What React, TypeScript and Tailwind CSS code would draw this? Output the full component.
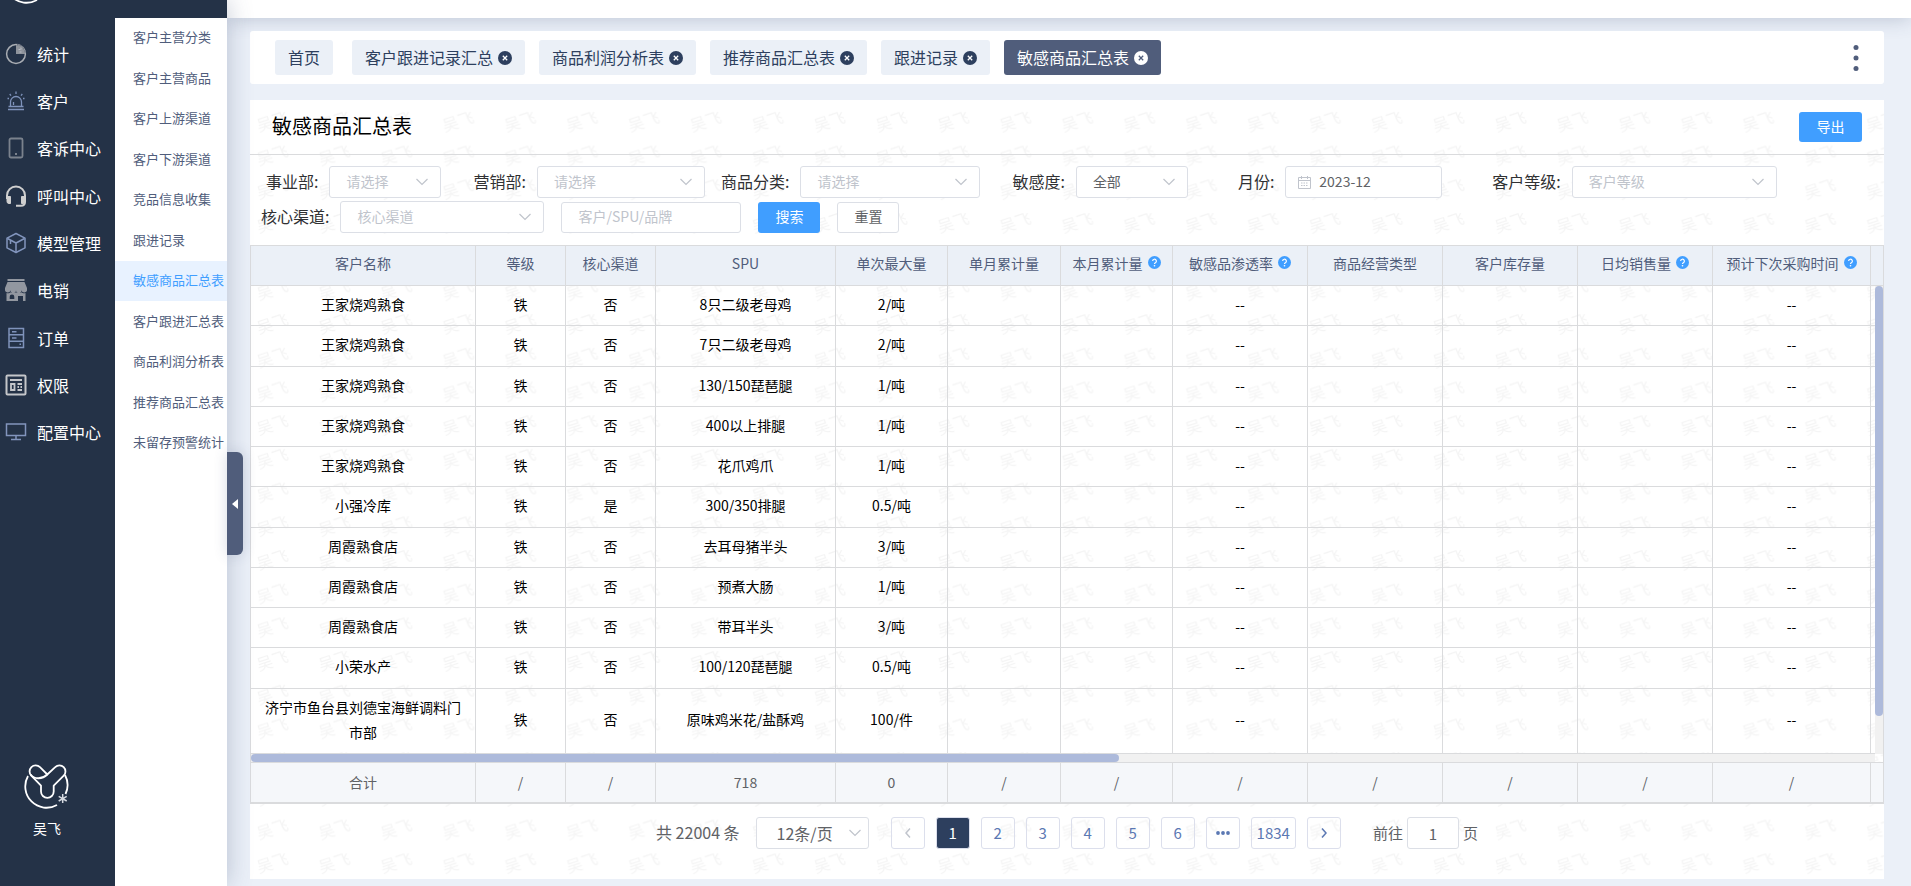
import React from "react";
import clsx from "clsx";

const navItems = [
  { label: "统计", icon: "pie" },
  { label: "客户", icon: "siren" },
  { label: "客诉中心", icon: "phone" },
  { label: "呼叫中心", icon: "headset" },
  { label: "模型管理", icon: "cube" },
  { label: "电销", icon: "shop" },
  { label: "订单", icon: "order" },
  { label: "权限", icon: "auth" },
  { label: "配置中心", icon: "monitor" },
];

const subItems = [
  "客户主营分类",
  "客户主营商品",
  "客户上游渠道",
  "客户下游渠道",
  "竞品信息收集",
  "跟进记录",
  "敏感商品汇总表",
  "客户跟进汇总表",
  "商品利润分析表",
  "推荐商品汇总表",
  "未留存预警统计",
];

const tabs = ["客户跟进记录汇总", "商品利润分析表", "推荐商品汇总表", "跟进记录", "敏感商品汇总表"];

const current = "敏感商品汇总表";

const columns = [
  { label: "客户名称", width: "w-[225px]" },
  { label: "等级", width: "w-[90px]" },
  { label: "核心渠道", width: "w-[90px]" },
  { label: "SPU", width: "w-[180px]" },
  { label: "单次最大量", width: "w-[112px]" },
  { label: "单月累计量", width: "w-[113px]" },
  { label: "本月累计量", width: "w-[112px]", help: true },
  { label: "敏感品渗透率", width: "w-[135px]", help: true },
  { label: "商品经营类型", width: "w-[135px]" },
  { label: "客户库存量", width: "w-[135px]" },
  { label: "日均销售量", width: "w-[135px]", help: true },
  { label: "预计下次采购时间", width: "w-[158px]", help: true },
  { label: "", width: "w-[13px]" },
];

const rows = [
  ["王家烧鸡熟食", "铁", "否", "8只二级老母鸡", "2/吨"],
  ["王家烧鸡熟食", "铁", "否", "7只二级老母鸡", "2/吨"],
  ["王家烧鸡熟食", "铁", "否", "130/150琵琶腿", "1/吨"],
  ["王家烧鸡熟食", "铁", "否", "400以上排腿", "1/吨"],
  ["王家烧鸡熟食", "铁", "否", "花爪鸡爪", "1/吨"],
  ["小强冷库", "铁", "是", "300/350排腿", "0.5/吨"],
  ["周霞熟食店", "铁", "否", "去耳母猪半头", "3/吨"],
  ["周霞熟食店", "铁", "否", "预煮大肠", "1/吨"],
  ["周霞熟食店", "铁", "否", "带耳半头", "3/吨"],
  ["小荣水产", "铁", "否", "100/120琵琶腿", "0.5/吨"],
  ["济宁市鱼台县刘德宝海鲜调料门市部", "铁", "否", "原味鸡米花/盐酥鸡", "100/件"],
];

const totals = ["合计", "/", "/", "718", "0", "/", "/", "/", "/", "/", "/", "/", ""];

function NavIcon({ name }: { name: string }) {
  const line = { fill: "none", strokeWidth: 1.5 };
  return (
    <svg viewBox="0 0 22 22" className="size-[22px] shrink-0" aria-hidden="true">
      {name === "pie" && (
        <g {...line} stroke="#a9adb3">
          <circle cx="11" cy="11" r="9.400" />
          <path d="M11 2v9h9.300A9.300 9.300 0 0 0 11 2z" fill="#8f949c" stroke="none" />
          <path d="M12 1.500A9.400 9.400 0 0 1 20.400 10" stroke="#6d7480" strokeDasharray="1.500 1" />
          <path d="M13.500 6.500h2M16 4.500v2M14.500 9h2" stroke="#b9bdc4" strokeWidth="1" />
        </g>
      )}
      {name === "siren" && (
        <g {...line} stroke="#7f93bb" strokeWidth={1.3}>
          <path d="M5.500 16v-4a5.500 5.500 0 0 1 11 0v4" />
          <path d="M3.500 16.500h15M3 19.500h16M8.500 15v-3" />
          <path d="M11 1.500v2.500M4.700 4l1.300 1.600M17.300 4L16 5.600M2.500 8.500h1.500M18 8.500h1.500" />
        </g>
      )}
      {name === "phone" && (
        <g fill="none" stroke="#7b828d" strokeWidth="1.800">
          <rect x="4.500" y="1.500" width="13" height="19" rx="1.500" />
          <path d="M10 17h2" />
        </g>
      )}
      {name === "headset" && (
        <g fill="none" stroke="#cfcfcf" strokeWidth="2">
          <path d="M2 14v-3.500a9 9 0 0 1 18 0V17c0 2.500-1.500 3.800-4 3.800h-5" />
          <path d="M2 11.500h3.500v7H4a2 2 0 0 1-2-2zM20 11.500h-3.500v7H18a2 2 0 0 0 2-2z" fill="#cfcfcf" strokeWidth="1" />
        </g>
      )}
      {name === "cube" && (
        <g {...line} stroke="#8295bd" strokeLinejoin="round">
          <path d="M11 1.500l9 4.700v9.600l-9 4.700-9-4.700V6.200z" />
          <path d="M2.500 6.500L11 11l8.500-4.500M11 11v9M5.500 8v4" />
        </g>
      )}
      {name === "shop" && (
        <g fill="#9297a0">
          <path d="M2.500 0h17v2h-17z" />
          <path d="M2.500 3h17L22 9v1.500a2.700 2.700 0 0 1-5.400.7 2.800 2.800 0 0 1-5.600 0 2.800 2.800 0 0 1-5.600 0A2.700 2.700 0 0 1 0 10.500V9z" />
          <path
            fillRule="evenodd"
            d="M1.500 14c2 .5 3 0 4-.8 1.500 1.200 4 1.200 5.500 0 1.500 1.200 4 1.200 5.500 0 1 .8 2 1.300 4 .8v8h-2.500v-5H13v5H1.500zM7 15.500a2.300 2.300 0 0 0-2.300 2.300V20h4.600v-2.200A2.300 2.300 0 0 0 7 15.500z"
          />
        </g>
      )}
      {name === "order" && (
        <g {...line} stroke="#7f93bb">
          <path d="M4 1.500h14.500v19H4zM4 7.800h14.500M4 14.200h14.500M7 4.700h4.500M7 11h4.500" />
          <path d="M14.500 17.300H16" />
        </g>
      )}
      {name === "auth" && (
        <g {...line} stroke="#c4c6ca" strokeWidth={2}>
          <rect x="1.500" y="1.500" width="19" height="19" rx="1" />
          <path d="M5 6h12" />
          <path d="M6 10h3.500v6H6zM12.500 10H17M12.500 13h1.500M15.500 13H17M12.500 16H17" strokeWidth="1.800" />
        </g>
      )}
      {name === "monitor" && (
        <g {...line} stroke="#8295bd">
          <path d="M1.500 3h19v11.500h-19zM11 14.500V18M6 18.500h10" />
        </g>
      )}
    </svg>
  );
}

function Logo() {
  return (
    <svg viewBox="0 0 46 46" className="size-[46px] shrink-0" fill="none" stroke="#fff" strokeWidth="1.800" aria-hidden="true">
      <path d="M4 12A21.300 21.300 0 0 0 33 41" />
      <path d="M41 11A21.300 21.300 0 0 1 41.500 30" />
      <path
        d="M23.300 10.500L16 3.200A6 6 0 0 0 7.300 11.700L17 21.700V27.500a6.300 6.300 0 0 0 12.700 0V21.700L39.700 11.700A6 6 0 0 0 31.200 3.200z"
        strokeLinejoin="round"
      />
      <path d="M6.500 10.500c4 5.500 12 4.500 16.800 0" />
      <path d="M38.700 30v9M34.700 32.400l8 4.600M42.700 32.400l-8 4.600" strokeWidth="1.500" stroke="#d5d9e0" />
    </svg>
  );
}

function Chevron({ className }: { className?: string }) {
  return (
    <svg
      viewBox="0 0 12 8"
      className={clsx("pointer-events-none absolute top-1/2 h-2 w-3 -translate-y-1/2", className)}
      fill="none"
      stroke="#c0c4cc"
      strokeWidth="1.200"
      aria-hidden="true"
    >
      <path d="M.5 1L6 6.500 11.500 1" />
    </svg>
  );
}

type FieldProps = {
  id: string;
  label: string;
  value: string;
  width: string;
  filled?: boolean;
  className?: string;
};

function SelectField({ id, label, value, width, filled, className }: FieldProps) {
  return (
    <div className={clsx("flex items-center gap-[11px]", className)}>
      <label htmlFor={id} className="pb-[2px] text-base text-[#303133]">
        {label}:
      </label>
      <div className={clsx("relative", width)}>
        <select
          id={id}
          className={clsx(
            "h-8 w-full appearance-none rounded-[3px] border border-[#dcdfe6] bg-white pb-[2px] pl-4 text-sm outline-none",
            filled ? "text-[#606266]" : "text-[#c0c4cc]"
          )}
        >
          <option>{value}</option>
        </select>
        <Chevron className="right-[13px]" />
      </div>
    </div>
  );
}

function Columns() {
  return (
    <colgroup>
      {columns.map((c, i) => (
        <col key={i} className={c.width} />
      ))}
    </colgroup>
  );
}

function Help() {
  return (
    <svg viewBox="0 0 14 14" className="size-[13px] shrink-0" aria-hidden="true">
      <circle cx="7" cy="7" r="7" fill="#409eff" />
      <path d="M5 5.500a2 2 0 1 1 3 1.700c-.7.400-1 .7-1 1.400" fill="none" stroke="#fff" strokeWidth="1.300" />
      <circle cx="7" cy="10.500" r=".9" fill="#fff" />
    </svg>
  );
}

function Sidebar() {
  return (
    <aside className="relative z-20 flex w-[227px] shrink-0 flex-col bg-white shadow-[0_0_24px_rgba(60,75,115,0.3)]">
      <div className="flex h-[18px] items-end overflow-hidden bg-[#243247] pl-1">
        <div className="mb-[13px]">
          <Logo />
        </div>
      </div>
      <div className="flex flex-1">
        <nav className="flex w-[115px] flex-col bg-[#243247] pt-3">
          <ul className="grid h-[426px] auto-rows-fr">
            {navItems.map((item) => (
              <li key={item.label} className="flex">
                <a href="#" className="flex items-center gap-[10px] pl-[5px] text-base whitespace-nowrap text-white">
                  <NavIcon name={item.icon} />
                  {item.label}
                </a>
              </li>
            ))}
          </ul>
          <div className="mt-auto flex w-[94px] flex-col items-center gap-2 pb-12 text-sm text-white">
            <Logo />
            吴飞
          </div>
        </nav>
        <ul className="grid h-[445px] flex-1 auto-rows-fr">
          {subItems.map((item) => (
            <li key={item} className={clsx("flex", item === current && "bg-[#e8f2ff]")}>
              <a
                href="#"
                className={clsx(
                  "flex w-full items-center pb-[2px] pl-[18px] text-[13px] whitespace-nowrap",
                  item === current ? "text-[#409eff]" : "text-[#505d7b]"
                )}
              >
                {item}
              </a>
            </li>
          ))}
        </ul>
      </div>
      {/* collapse handle */}
      <button
        aria-label="收起菜单"
        className="absolute top-[452px] left-full flex h-[103px] w-4 items-center justify-center rounded-r-md bg-[#505d7b] shadow-[0_0_14px_rgba(60,75,115,0.2)]"
      >
        <svg viewBox="0 0 6 10" className="h-[10px] w-[6px]" fill="#fff" aria-hidden="true">
          <path d="M6 0v10L0 5z" />
        </svg>
      </button>
    </aside>
  );
}

function TabBar() {
  return (
    <div className="relative flex items-center rounded-[3px] bg-white px-[25px] py-[9px]">
      <button className="h-[35px] rounded-[3px] bg-[#ebf0f7] px-[13px] pb-[2px] text-base text-[#2d3f5e]">首页</button>
      <div className="ml-[19px] flex gap-[14px]">
        {tabs.map((tab) => {
          const active = tab === current;
          return (
            <div
              key={tab}
              className={clsx(
                "flex h-[35px] items-center gap-[5px] rounded-[3px] px-[13px] text-base",
                active ? "bg-[#505d7b] text-white" : "bg-[#ebf0f7] text-[#2d3f5e]"
              )}
            >
              <a href="#" className="pb-[2px]">
                {tab}
              </a>
              <button aria-label="关闭">
                <svg viewBox="0 0 14 14" className="size-[14px]" aria-hidden="true">
                  <circle cx="7" cy="7" r="7" fill={active ? "#fff" : "#2d3f5e"} />
                  <path d="M4.800 4.800l4.400 4.400M9.200 4.800L4.800 9.200" stroke={active ? "#505d7b" : "#fff"} strokeWidth="1.300" />
                </svg>
              </button>
            </div>
          );
        })}
      </div>
      <button aria-label="更多" className="ml-auto">
        <svg viewBox="0 0 6 28" className="h-7 w-[6px]" fill="#505d7b" aria-hidden="true">
          <circle cx="3" cy="3.500" r="2.500" />
          <circle cx="3" cy="14" r="2.500" />
          <circle cx="3" cy="24.500" r="2.500" />
        </svg>
      </button>
    </div>
  );
}

function Watermark() {
  return (
    <svg className="pointer-events-none absolute inset-0 h-full w-full" aria-hidden="true">
      <pattern id="wm" width="61.9" height="33.7" patternUnits="userSpaceOnUse">
        <text x="9" y="32" fontSize="16" fill="#000" fillOpacity="0.045" transform="rotate(-18 9 32)">
          吴飞
        </text>
      </pattern>
      <rect width="100%" height="100%" fill="url(#wm)" />
    </svg>
  );
}

function Filters() {
  return (
    <form className="relative flex flex-col gap-[3px] pt-[11px] pb-3" onSubmit={(e) => e.preventDefault()}>
      <div className="flex items-center pl-4">
        <SelectField id="dept" label="事业部" value="请选择" width="w-[112px]" />
        <SelectField id="market" label="营销部" value="请选择" width="w-[168px]" className="ml-8" />
        <SelectField id="category" label="商品分类" value="请选择" width="w-[180px]" className="ml-4" />
        <SelectField id="sensitive" label="敏感度" value="全部" width="w-[112px]" filled className="ml-8" />
        <div className="ml-[50px] flex items-center gap-[11px]">
          <label htmlFor="month" className="pb-[2px] text-base text-[#303133]">
            月份:
          </label>
          <div className="relative w-[157px]">
            <input
              id="month"
              defaultValue="2023-12"
              className="h-8 w-full rounded-[3px] border border-[#dcdfe6] bg-white pb-[2px] pl-[33px] text-sm text-[#606266] outline-none"
            />
            <svg viewBox="0 0 13 13" className="absolute top-[10px] left-[13px] size-[13px]" fill="none" stroke="#c0c4cc" aria-hidden="true">
              <path d="M.5 1.500h12v11H.5zM.5 4.500h12M3.500 0v3M9.500 0v3" />
              <path d="M3 7h7M3 9.500h7" strokeDasharray="1.500 1" />
            </svg>
          </div>
        </div>
        <SelectField id="level" label="客户等级" value="客户等级" width="w-[205px]" className="ml-[50px]" />
      </div>
      <div className="flex items-center gap-[17px] pl-[11px]">
        <SelectField id="channel" label="核心渠道" value="核心渠道" width="w-[204px]" />
        <input
          aria-label="客户/SPU/品牌"
          placeholder="客户/SPU/品牌"
          className="h-[31px] w-[180px] rounded-[3px] border border-[#dcdfe6] bg-white px-4 pb-[2px] text-sm outline-none placeholder:text-[#c0c4cc]"
        />
        <button className="h-[31px] w-[62px] rounded-[3px] bg-[#409eff] pb-[2px] text-sm text-white">搜索</button>
        <button className="h-[31px] w-[62px] rounded-[3px] border border-[#dcdfe6] bg-white pb-[2px] text-sm text-[#606266]">重置</button>
      </div>
    </form>
  );
}

function DataTable() {
  return (
    <div className="relative border-l border-[#dadbdd] text-sm">
      <table className="w-full table-fixed border-separate border-spacing-0 bg-[#ebf0f7]">
        <Columns />
        <thead>
          <tr className="h-[41px]">
            {columns.map((c, i) => (
              <th key={i} className="border-y border-r border-[#dadbdd] p-0 pb-[6px] font-normal text-[#505d7b]">
                <span className="flex items-center justify-center gap-[5px] whitespace-nowrap">
                  {c.label}
                  {c.help && <Help />}
                </span>
              </th>
            ))}
          </tr>
        </thead>
      </table>

      <div className="relative">
        <table className="h-[468px] w-full table-fixed border-separate border-spacing-0 text-center leading-[25px] text-black">
          <Columns />
          <tbody>
            {rows.map((row, r) => (
              <tr key={r} className="h-10">
                {columns.map((c, i) => (
                  <td key={i} className={clsx("border-r border-b border-[#dadbdd] pt-[6px] pb-2", c.label ? "px-[11px]" : "px-0")}>
                    {row[i] ?? (i === 7 || i === 11 ? "--" : "")}
                  </td>
                ))}
              </tr>
            ))}
          </tbody>
        </table>
        {/* vertical scrollbar */}
        <div className="absolute inset-y-0 right-px w-2 bg-[#f1f1f1]">
          <div className="h-[430px] rounded-full bg-[#adbadb]" />
        </div>
      </div>

      {/* horizontal scrollbar */}
      <div className="flex h-2 border-r border-[#dadbdd] pr-2">
        <div className="flex-1 bg-[#f1f1f1]">
          <div className="h-2 w-[868px] rounded-full bg-[#adbadb]" />
        </div>
      </div>

      <table className="w-full table-fixed border-separate border-spacing-0 bg-[#f5f7fa] text-center text-[#606266]">
        <Columns />
        <tbody>
          <tr className="h-[42px]">
            {totals.map((t, i) => (
              <td key={i} className="border-t border-r border-b-2 border-[#dadbdd] p-0 pb-[2px]">
                {t}
              </td>
            ))}
          </tr>
        </tbody>
      </table>
    </div>
  );
}

function Pagination() {
  const pageBtn = "flex h-8 min-w-[34px] items-center justify-center rounded-[3px] border px-[5px]";
  return (
    <div className="relative flex items-center justify-center pt-[13px] pb-[30px] text-[15px] text-[#606266]">
      <span className="pb-[2px] text-base">共 22004 条</span>
      <div className="relative ml-4 w-[113px]">
        <select
          aria-label="每页条数"
          className="h-8 w-full appearance-none rounded-[3px] border border-[#dcdfe6] bg-white pl-5 text-base outline-none"
        >
          <option>12条/页</option>
        </select>
        <Chevron className="right-2" />
      </div>
      <div className="ml-[22px] flex gap-[11px] text-[#5b78b3]">
        <button aria-label="上一页" className={clsx(pageBtn, "border-[#dcdfec]")}>
          <svg viewBox="0 0 6 10" className="h-[10px] w-[6px]" fill="none" stroke="#c0c4cc" strokeWidth="1.500">
            <path d="M5 .5L1 5l4 4.500" />
          </svg>
        </button>
        <button className={clsx(pageBtn, "border-[#dcdfec] bg-[#2d3f5e] text-white")}>1</button>
        {["2", "3", "4", "5", "6"].map((p) => (
          <button key={p} className={clsx(pageBtn, "border-[#dcdfec]")}>
            {p}
          </button>
        ))}
        <button aria-label="更多页" className={clsx(pageBtn, "border-[#dcdfec]")}>
          <svg viewBox="0 0 14 4" className="h-1 w-[14px]" fill="#5b78b3">
            <circle cx="2" cy="2" r="1.900" />
            <circle cx="7" cy="2" r="1.900" />
            <circle cx="12" cy="2" r="1.900" />
          </svg>
        </button>
        <button className={clsx(pageBtn, "border-[#dcdfec]")}>1834</button>
        <button aria-label="下一页" className={clsx(pageBtn, "border-[#dcdfec]")}>
          <svg viewBox="0 0 6 10" className="h-[10px] w-[6px]" fill="none" stroke="#5b78b3" strokeWidth="1.500">
            <path d="M1 .5L5 5 1 9.500" />
          </svg>
        </button>
      </div>
      <label htmlFor="jump" className="ml-8">
        前往
      </label>
      <input
        id="jump"
        defaultValue="1"
        className="mx-1 h-8 w-[52px] rounded-[3px] border border-[#dcdfe6] bg-white text-center outline-none"
      />
      <span>页</span>
    </div>
  );
}

export default function App() {
  return (
    <div className='flex min-h-screen bg-[#ebf0f8] font-["Noto_Sans_CJK_SC",sans-serif]'>
      <Sidebar />
      <div className="flex min-w-0 flex-1 flex-col">
        <header className="h-[18px] bg-white shadow-[0_0_20px_rgba(60,75,115,0.3)]" />
        <main className="relative flex flex-1 flex-col gap-4 pt-[13px] pr-[27px] pb-[7px] pl-[23px]">
          <TabBar />
          <section className="relative flex-1 bg-white">
            <Watermark />
            <div className="relative flex items-center justify-between border-b border-[#dadbdd] py-3 pr-[22px] pl-[22px]">
              <h1 className="pb-[2px] text-xl leading-7 text-black">{current}</h1>
              <button className="h-[30px] w-[63px] rounded-[3px] bg-[#409eff] pb-[2px] text-sm text-white">导出</button>
            </div>
            <Filters />
            <DataTable />
            <Pagination />
          </section>
        </main>
      </div>
    </div>
  );
}
